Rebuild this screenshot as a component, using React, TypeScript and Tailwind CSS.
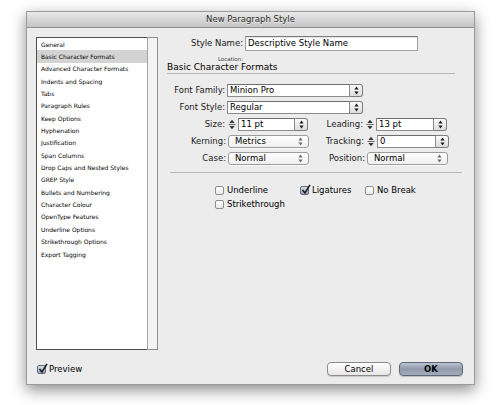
import React from "react";

const listItems = [
  "General",
  "Basic Character Formats",
  "Advanced Character Formats",
  "Indents and Spacing",
  "Tabs",
  "Paragraph Rules",
  "Keep Options",
  "Hyphenation",
  "Justification",
  "Span Columns",
  "Drop Caps and Nested Styles",
  "GREP Style",
  "Bullets and Numbering",
  "Character Colour",
  "OpenType Features",
  "Underline Options",
  "Strikethrough Options",
  "Export Tagging",
];

function UpDown({ dark }: { dark?: boolean }) {
  return (
    <svg width="5" height="9" viewBox="0 0 5 9">
      <path d="M2.5 0.5 L4.6 3.4 H0.4 Z M2.5 8.5 L4.6 5.6 H0.4 Z" fill={dark ? "#1a1a1a" : "#6b6b6b"} />
    </svg>
  );
}

function Stepper() {
  return (
    <div className="flex h-full w-[10px] items-center justify-center">
      <svg width="8" height="11" viewBox="0 0 8 11">
        <path d="M4 0.8 L6.6 4 H1.4 Z" fill="#333" />
        <rect x="0.5" y="5" width="7" height="1" fill="#666" />
        <path d="M4 10.2 L6.6 7 H1.4 Z" fill="#333" />
      </svg>
    </div>
  );
}

function Combo({ value, className }: { value: string; className: string }) {
  return (
    <div className={`flex h-[13px] ${className}`}>
      <div className="flex flex-1 items-center border border-[#8c8c8c] border-t-[#6e6e6e] bg-white pl-[2px] text-black">
        {value}
      </div>
      <div className="flex w-[13px] items-center justify-center rounded-r-[3px] border border-l-0 border-[#7e7e7e] bg-gradient-to-b from-[#fbfbfb] to-[#dcdcdc]">
        <UpDown dark />
      </div>
    </div>
  );
}

function Popup({ value, className }: { value: string; className: string }) {
  return (
    <div
      className={`flex h-[13px] items-center justify-between rounded-[3px] border border-[#9c9c9c] bg-gradient-to-b from-white to-[#efefef] pl-[6px] pr-[5px] shadow-[0_1px_0_rgba(255,255,255,0.8)] ${className}`}
    >
      <span>{value}</span>
      <UpDown />
    </div>
  );
}

function Check({ checked, label }: { checked?: boolean; label: string }) {
  return (
    <div className="flex items-center gap-[3px]">
      <div
        className={`relative h-[9px] w-[9px] rounded-[2px] border ${
          checked
            ? "border-[#5f6a7a] bg-gradient-to-b from-[#d7dde6] to-[#9aa5b5]"
            : "border-[#8e8e8e] bg-gradient-to-b from-white to-[#e9e9e9]"
        }`}
      >
        {checked && (
          <svg className="absolute -top-[3px] left-[0px]" width="10" height="11" viewBox="0 0 10 11">
            <path d="M1.5 6 L4 9 L9 0.8" stroke="#1c1c1c" strokeWidth="1.6" fill="none" />
          </svg>
        )}
      </div>
      <span>{label}</span>
    </div>
  );
}

function Label({ children, w }: { children: React.ReactNode; w: string }) {
  return <div className={`${w} shrink-0 pr-[2px] text-right text-[#1a1a1a]`}>{children}</div>;
}

export default function App() {
  return (
    <div className="h-[405px] w-[500px] bg-white pl-[26px] pt-[11px] font-['DejaVu_Sans',sans-serif] text-[8.5px] text-black">
      <div className="flex h-[374px] w-[449px] flex-col border border-[#9a9a9a] bg-[#ececec] shadow-[0_5px_14px_rgba(0,0,0,0.45)]">
        {/* title bar */}
        <div className="flex h-[16px] shrink-0 items-center justify-center border-b border-[#8f8f8f] bg-gradient-to-b from-[#e9e9e9] to-[#c4c4c4] text-[8.5px] text-[#2b2b2b] [text-shadow:0_1px_0_rgba(255,255,255,0.6)]">
          New Paragraph Style
        </div>

        <div className="flex flex-1 flex-col px-[9px] pt-[8px]">
          <div className="flex">
            {/* category list */}
            <div className="mt-[1px] flex h-[313px] w-[122px] shrink-0">
              <div className="flex-1 border border-r-0 border-[#4f4f4f] bg-white">
                {listItems.map((item, i) => (
                  <div
                    key={item}
                    className={`flex h-[12.35px] items-center pl-[4px] text-[6px] font-medium ${
                      i === 1 ? "bg-[#d3d3d3]" : ""
                    }`}
                  >
                    {item}
                  </div>
                ))}
              </div>
              <div className="w-[11px] border border-[#8d8d8d] border-l-[#a5a5a5] bg-[#f4f4f4]" />
            </div>

            {/* form */}
            <div className="ml-[9px] flex flex-1 flex-col">
              <div className="flex h-[15px] items-center">
                <Label w="w-[78px]">Style Name:</Label>
                <div className="flex h-full w-[173px] items-center border border-[#a3a3a3] border-t-[#7c7c7c] bg-white pl-[2px] shadow-[inset_0_1px_1px_rgba(0,0,0,0.12)]">
                  Descriptive Style Name
                </div>
              </div>
              <div className="mt-[1px] flex h-[9px] items-start">
                <Label w="w-[78px]">
                  <span className="text-[5.5px] leading-[9px] text-[#444]">Location:</span>
                </Label>
              </div>
              <div className="mt-[2px] flex h-[11px] w-[288px] items-center border-b border-[#b5b5b5] text-[9px]">
                Basic Character Formats
              </div>

              <div className="mt-[10px] flex flex-col gap-[4px]">
                <div className="flex h-[13px] items-center">
                  <Label w="w-[60px]">Font Family:</Label>
                  <Combo value="Minion Pro" className="w-[136px]" />
                </div>
                <div className="flex h-[13px] items-center">
                  <Label w="w-[60px]">Font Style:</Label>
                  <Combo value="Regular" className="w-[136px]" />
                </div>
                <div className="flex h-[13px] items-center">
                  <Label w="w-[60px]">Size:</Label>
                  <Stepper />
                  <Combo value="11 pt" className="ml-[1px] w-[70px]" />
                  <Label w="w-[57px]">Leading:</Label>
                  <Stepper />
                  <Combo value="13 pt" className="ml-[1px] w-[71px]" />
                </div>
                <div className="flex h-[13px] items-center">
                  <Label w="w-[61px]">Kerning:</Label>
                  <Popup value="Metrics" className="w-[81px]" />
                  <Label w="w-[57px]">Tracking:</Label>
                  <Stepper />
                  <Combo value="0" className="ml-[1px] w-[72px]" />
                </div>
                <div className="flex h-[13px] items-center">
                  <Label w="w-[61px]">Case:</Label>
                  <Popup value="Normal" className="w-[81px]" />
                  <Label w="w-[58px]">Position:</Label>
                  <Popup value="Normal" className="w-[81px]" />
                </div>
              </div>

              <div className="ml-[3px] mt-[7px] h-0 w-[292px] border-t border-[#b5b5b5]" />

              <div className="ml-[48px] mt-[12px] flex flex-col gap-[4px]">
                <div className="flex h-[10px] items-center">
                  <div className="w-[85px]">
                    <Check label="Underline" />
                  </div>
                  <div className="w-[65px]">
                    <Check checked label="Ligatures" />
                  </div>
                  <Check label="No Break" />
                </div>
                <div className="flex h-[10px] items-center">
                  <Check label="Strikethrough" />
                </div>
              </div>
            </div>
          </div>

          {/* footer */}
          <div className="mt-[12px] flex h-[14px] items-center justify-between pr-[2px]">
            <div className="pl-[1px]">
              <Check checked label="Preview" />
            </div>
            <div className="flex gap-[8px]">
              <div className="flex h-[14px] w-[64px] items-center justify-center rounded-[4px] border border-[#8a8a8a] bg-gradient-to-b from-white to-[#e6e6e6] shadow-[0_1px_1px_rgba(0,0,0,0.15)]">
                Cancel
              </div>
              <div className="flex h-[14px] w-[64px] items-center justify-center rounded-[4px] border border-[#5c6576] bg-gradient-to-b from-[#bcc4d0] via-[#909aab] to-[#a3acba] font-semibold shadow-[0_1px_1px_rgba(0,0,0,0.2)]">
                OK
              </div>
            </div>
          </div>
        </div>
      </div>
    </div>
  );
}
